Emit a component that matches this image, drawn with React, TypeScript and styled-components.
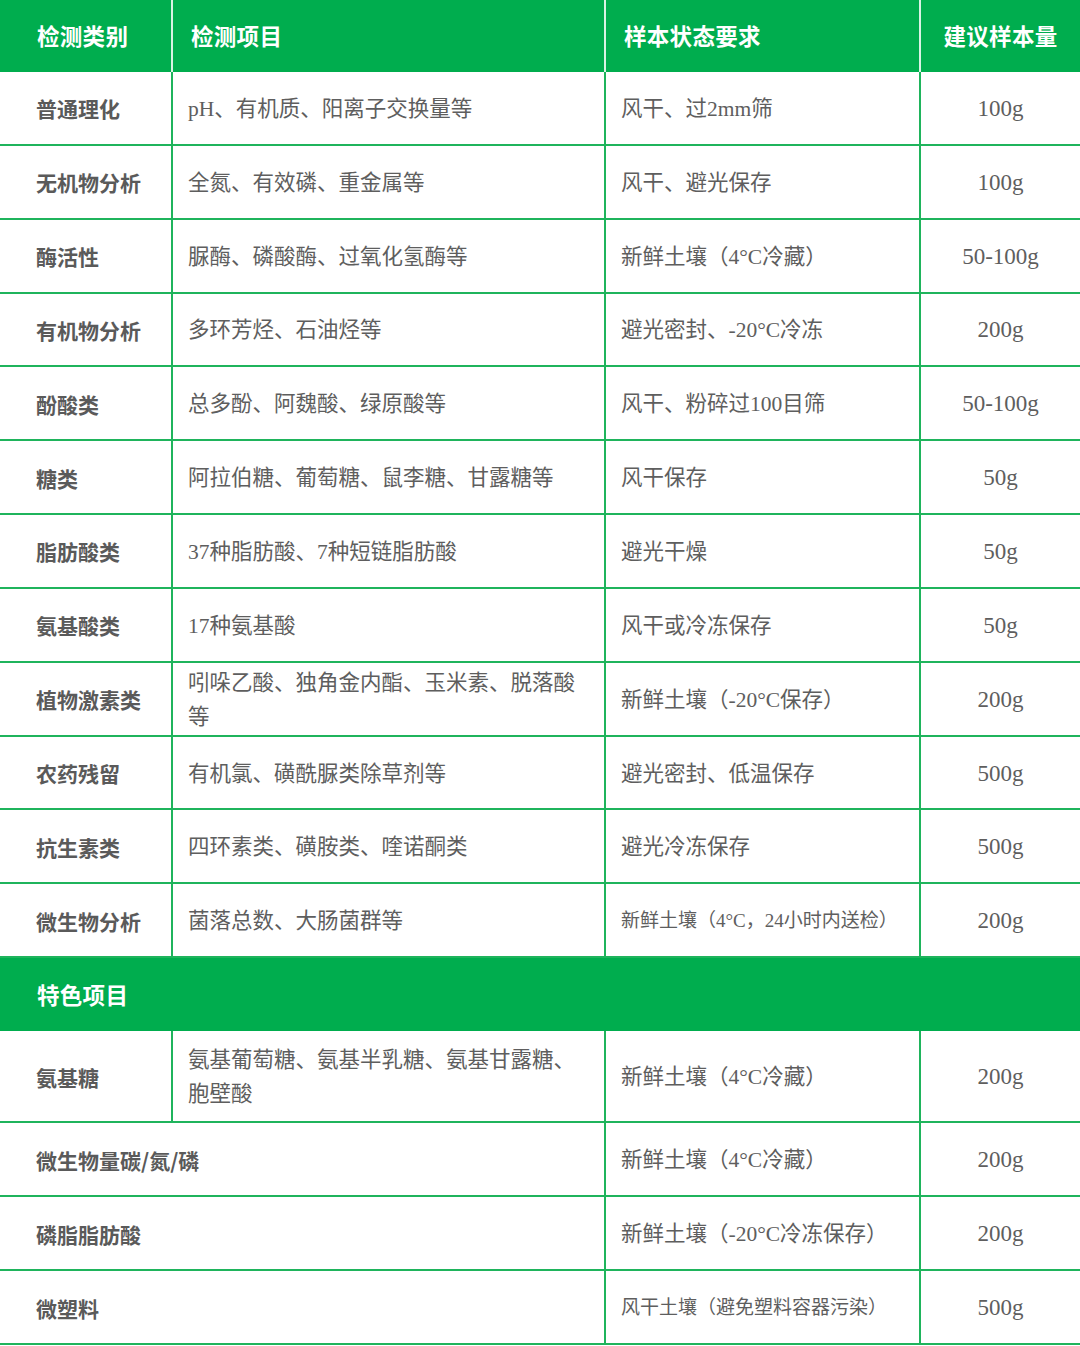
import React from "react";
import styled, { createGlobalStyle } from "styled-components";

const GREEN = "#00ad4e";
const LINE = "#1fb45c";
const TEXT = "#5e5e5e";
const SERIF = `"Liberation Serif", "Noto Sans CJK SC", serif`;
const SANS = `"Noto Sans CJK SC", "Noto Sans", sans-serif`;

const Global = createGlobalStyle`
  html, body { margin: 0; padding: 0; background: #ffffff; }
  * { box-sizing: border-box; }
`;

const Table = styled.div`
  width: 1080px;
  display: flex;
  flex-direction: column;
  background: #ffffff;
`;

const HeadRow = styled.div`
  display: grid;
  grid-template-columns: 171px 433px 315px 1fr;
  height: 72px;
  background: ${GREEN};
`;

const HeadCell = styled.div<{ $center?: boolean; $first?: boolean }>`
  display: flex;
  align-items: center;
  justify-content: ${(p) => (p.$center ? "center" : "flex-start")};
  padding-left: ${(p) => (p.$center ? "0" : p.$first ? "37px" : "18px")};
  padding-bottom: 3px;
  border-left: ${(p) => (p.$first ? "none" : "2px solid rgba(255,255,255,0.85)")};
  font-family: ${SANS};
  font-weight: 700;
  font-size: 22.5px;
  color: #ffffff;
  letter-spacing: 0.3px;
`;

const Row = styled.div<{ $h: number }>`
  display: grid;
  grid-template-columns: 171px 433px 315px 1fr;
  height: ${(p) => p.$h}px;
  border-bottom: 2px solid ${LINE};
`;

const LabelCell = styled.div<{ $span?: boolean }>`
  grid-column: ${(p) => (p.$span ? "1 / span 2" : "auto")};
  display: flex;
  align-items: center;
  padding: 1px 0 0 36px;
  font-family: ${SANS};
  font-weight: 700;
  font-size: 21px;
  color: #5a5a5a;
`;

const TextCell = styled.div<{ $small?: boolean }>`
  display: flex;
  align-items: center;
  border-left: 2px solid ${LINE};
  padding: 2px 22px 0 15px;
  font-family: ${SERIF};
  font-size: ${(p) => (p.$small ? "19px" : "21.5px")};
  line-height: 34px;
  color: ${TEXT};
`;

const AmountCell = styled.div`
  display: flex;
  align-items: center;
  justify-content: center;
  border-left: 2px solid ${LINE};
  padding-top: 2px;
  font-family: ${SERIF};
  font-size: 23px;
  color: ${TEXT};
`;

const SectionRow = styled.div`
  display: flex;
  align-items: center;
  height: 73px;
  padding: 0 0 2px 37px;
  background: ${GREEN};
  font-family: ${SANS};
  font-weight: 700;
  font-size: 22.5px;
  color: #ffffff;
  letter-spacing: 0.3px;
`;

type Item = {
  cat: string;
  items?: string;
  state: string;
  amount: string;
  small?: boolean;
  h?: number;
};

const main: Item[] = [
  { cat: "普通理化", items: "pH、有机质、阳离子交换量等", state: "风干、过2mm筛", amount: "100g" },
  { cat: "无机物分析", items: "全氮、有效磷、重金属等", state: "风干、避光保存", amount: "100g" },
  { cat: "酶活性", items: "脲酶、磷酸酶、过氧化氢酶等", state: "新鲜土壤（4°C冷藏）", amount: "50-100g" },
  { cat: "有机物分析", items: "多环芳烃、石油烃等", state: "避光密封、-20°C冷冻", amount: "200g" },
  { cat: "酚酸类", items: "总多酚、阿魏酸、绿原酸等", state: "风干、粉碎过100目筛", amount: "50-100g" },
  { cat: "糖类", items: "阿拉伯糖、葡萄糖、鼠李糖、甘露糖等", state: "风干保存", amount: "50g" },
  { cat: "脂肪酸类", items: "37种脂肪酸、7种短链脂肪酸", state: "避光干燥", amount: "50g" },
  { cat: "氨基酸类", items: "17种氨基酸", state: "风干或冷冻保存", amount: "50g" },
  { cat: "植物激素类", items: "吲哚乙酸、独角金内酯、玉米素、脱落酸等", state: "新鲜土壤（-20°C保存）", amount: "200g" },
  { cat: "农药残留", items: "有机氯、磺酰脲类除草剂等", state: "避光密封、低温保存", amount: "500g" },
  { cat: "抗生素类", items: "四环素类、磺胺类、喹诺酮类", state: "避光冷冻保存", amount: "500g" },
  { cat: "微生物分析", items: "菌落总数、大肠菌群等", state: "新鲜土壤（4°C，24小时内送检）", amount: "200g", small: true },
];

const special: Item[] = [
  { cat: "氨基糖", items: "氨基葡萄糖、氨基半乳糖、氨基甘露糖、胞壁酸", state: "新鲜土壤（4°C冷藏）", amount: "200g", h: 92 },
  { cat: "微生物量碳/氮/磷", state: "新鲜土壤（4°C冷藏）", amount: "200g", h: 74 },
  { cat: "磷脂脂肪酸", state: "新鲜土壤（-20°C冷冻保存）", amount: "200g", h: 74 },
  { cat: "微塑料", state: "风干土壤（避免塑料容器污染）", amount: "500g", h: 74, small: true },
];

function DataRow({ item, h }: { item: Item; h: number }) {
  return (
    <Row $h={h}>
      <LabelCell $span={!item.items}>{item.cat}</LabelCell>
      {item.items && <TextCell>{item.items}</TextCell>}
      <TextCell $small={item.small}>{item.state}</TextCell>
      <AmountCell>{item.amount}</AmountCell>
    </Row>
  );
}

export default function App() {
  return (
    <>
      <Global />
      <Table>
        <HeadRow>
          <HeadCell $first>检测类别</HeadCell>
          <HeadCell>检测项目</HeadCell>
          <HeadCell>样本状态要求</HeadCell>
          <HeadCell $center>建议样本量</HeadCell>
        </HeadRow>
        {main.map((it) => (
          <DataRow key={it.cat} item={it} h={73.85} />
        ))}
        <SectionRow>特色项目</SectionRow>
        {special.map((it) => (
          <DataRow key={it.cat} item={it} h={it.h ?? 74} />
        ))}
      </Table>
    </>
  );
}
